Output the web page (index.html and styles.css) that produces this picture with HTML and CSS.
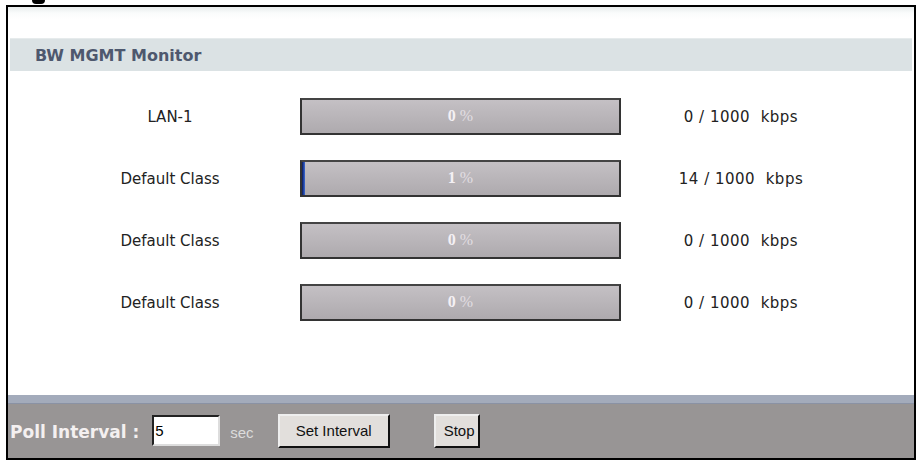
FILE: index.html
```html
<!DOCTYPE html>
<html lang="en">

<head>
  <meta charset="UTF-8">
  <title>BW MGMT Monitor</title>
  <link rel="stylesheet" href="styles.css">
</head>

<body>
  <div class="caption"><div class="caption-tail"></div></div>

  <div class="frame">
    <div class="panel">
      <h2 class="panel-title">BW MGMT Monitor</h2>

      <div class="monitor">
        <div class="row">
          <div class="row-label">LAN-1</div>
          <div class="bar"><div class="bar-fill" style="width: 0%"></div><span class="bar-text">0 <i>%</i></span></div>
          <div class="row-value">0 / 1000&nbsp; kbps</div>
        </div>
        <div class="row">
          <div class="row-label">Default Class</div>
          <div class="bar"><div class="bar-fill" style="width: 1%"></div><span class="bar-text">1 <i>%</i></span></div>
          <div class="row-value">14 / 1000&nbsp; kbps</div>
        </div>
        <div class="row">
          <div class="row-label">Default Class</div>
          <div class="bar"><div class="bar-fill" style="width: 0%"></div><span class="bar-text">0 <i>%</i></span></div>
          <div class="row-value">0 / 1000&nbsp; kbps</div>
        </div>
        <div class="row">
          <div class="row-label">Default Class</div>
          <div class="bar"><div class="bar-fill" style="width: 0%"></div><span class="bar-text">0 <i>%</i></span></div>
          <div class="row-value">0 / 1000&nbsp; kbps</div>
        </div>
      </div>
    </div>

    <div class="toolbar">
      <span class="poll-label">Poll Interval :</span>
      <input class="poll-input" type="text" value="5">
      <span class="poll-unit">sec</span>
      <button class="btn btn-set">Set Interval</button>
      <button class="btn btn-stop">Stop</button>
    </div>
  </div>
</body>

</html>
```

FILE: styles.css
```css
body {
  margin: 0;
  background-color: #fff;
  font-family: "DejaVu Sans", Verdana, sans-serif;
}

/* only the tail of the figure caption is visible above the frame */
.caption {
  height: 5px;
  padding-left: 32px;
}

.caption-tail {
  width: 13px;
  height: 4px;
  background-color: #000;
  border-radius: 0 0 7px 7px;
}

.frame {
  margin-left: 6px;
  width: 906px;
  height: 451px;
  border: 2px solid #000;
  display: flex;
  flex-direction: column;
}

.panel {
  flex: 1;
  padding: 31px 2px 0 2px;
  background: linear-gradient(to bottom, #e8ecec 0, #fafcfc 6px, #fff 12px);
}

.panel-title {
  margin: 0;
  height: 32px;
  line-height: 33px;
  padding-left: 25px;
  font-size: 16px;
  font-weight: bold;
  color: #4e586e;
  background-color: #dbe2e4;
  border-top: 1px solid #e6ebec;
}

.monitor {
  padding-top: 27px;
  display: flex;
  flex-direction: column;
  gap: 26px;
}

.row {
  display: flex;
  align-items: center;
  height: 36px;
}

.row-label {
  width: 260px;
  padding-left: 30px;
  padding-top: 2px;
  text-align: center;
  font-size: 15px;
  color: #222;
}

.bar {
  position: relative;
  width: 317px;
  height: 33px;
  border: 2px solid #333;
  border-top-color: #444;
  background: linear-gradient(to bottom, #c4c0c4, #aeaaae);
  display: flex;
  align-items: center;
  justify-content: center;
}

.bar-fill {
  position: absolute;
  left: 0;
  top: 0;
  bottom: 0;
  background: linear-gradient(to right, #0a1a5c, #3a6ad8);
}

.bar-text {
  position: relative;
  font: bold 16px "Liberation Serif", "Times New Roman", serif;
  color: #f4f0f4;
}

.bar-text i {
  font-style: normal;
  font-weight: normal;
  color: #e2dee2;
}

.row-value {
  width: 240px;
  padding-top: 2px;
  text-align: center;
  font-size: 15px;
  letter-spacing: 0.5px;
  color: #222;
}

.toolbar {
  height: 55px;
  border-top: 8px solid #a3abbb;
  background-color: #989595;
  display: flex;
  align-items: center;
  padding-left: 2px;
  box-shadow: inset 0 1px 0 #8a92a4;
}

.poll-label {
  font-size: 17px;
  font-weight: bold;
  color: #f4f0f0;
  margin-right: 13px;
  padding-top: 2px;
}

.poll-input {
  width: 62px;
  height: 27px;
  padding: 0 1px;
  margin: 0;
  font: 15px "Liberation Sans", Arial, sans-serif;
  color: #000;
  background-color: #fff;
  border: 2px inset #777;
  border-right-color: #ddd;
  border-bottom-color: #ddd;
}

.poll-unit {
  margin-left: 10px;
  padding-top: 4px;
  font: 15px "Liberation Sans", Arial, sans-serif;
  color: #dcdcdc;
}

.btn {
  height: 34px;
  padding: 0 8px;
  font: 15px "Liberation Sans", Arial, sans-serif;
  color: #111;
  background-color: #e2dfdc;
  border: 2px outset #eee;
  border-right-color: #666;
  border-bottom-color: #666;
  cursor: pointer;
}

.btn-set {
  width: 112px;
  margin-left: 24px;
}

.btn-stop {
  width: 46px;
  margin-left: 44px;
}
```
